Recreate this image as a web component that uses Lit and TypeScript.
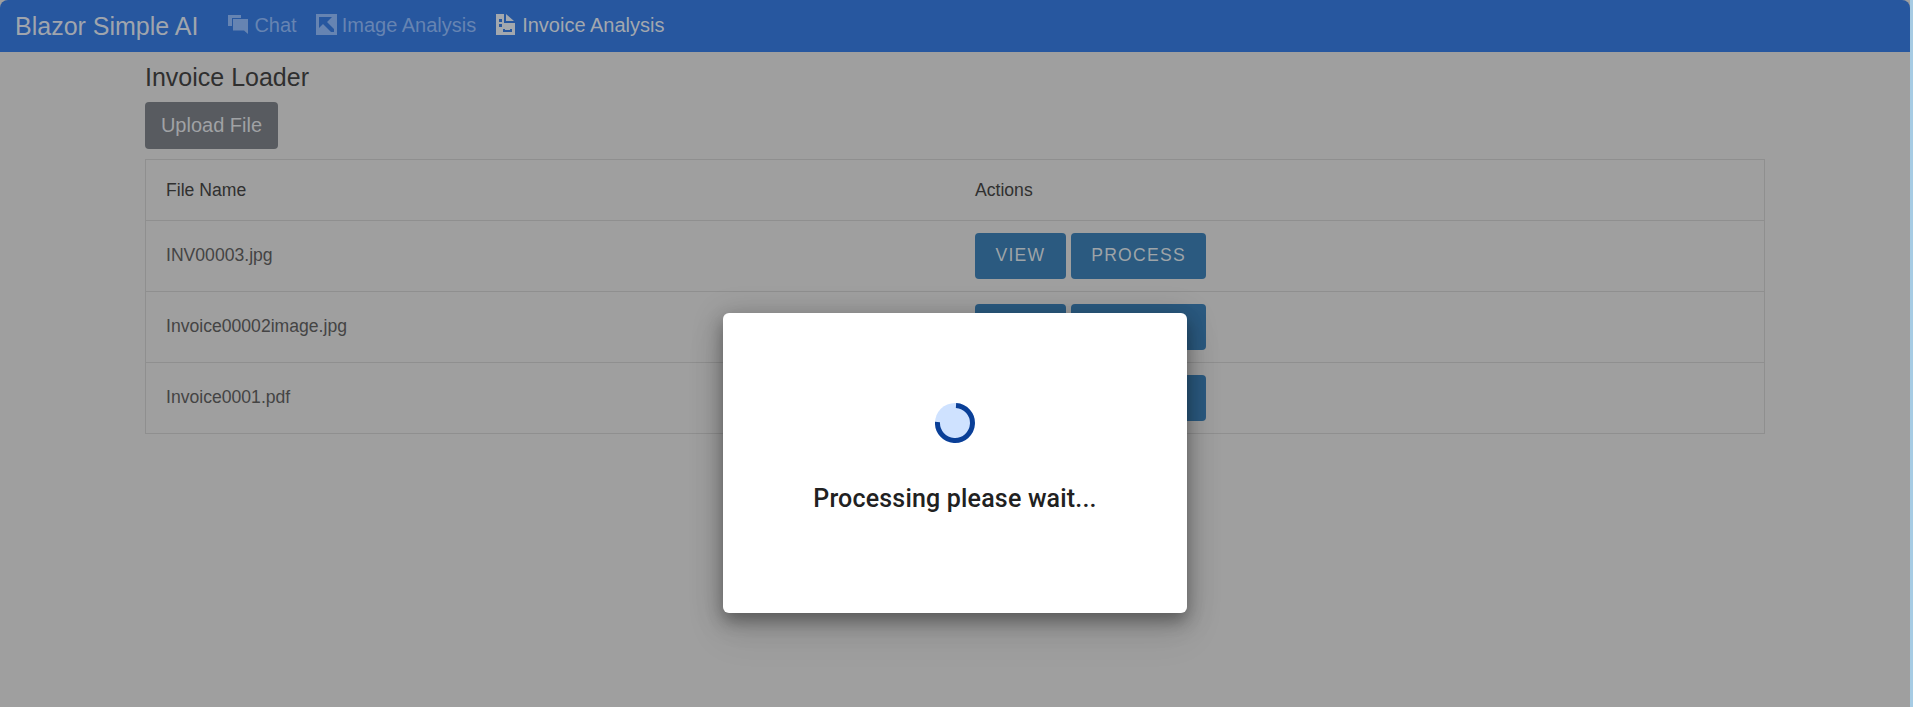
import { LitElement, html, css, svg } from "lit";
import { customElement } from "lit/decorators.js";

const chatIcon = svg`<path d="M0 1h13v3H4v8H0z"/><path d="M5 5h15v15l-4-3.5H5z"/>`;
const imgIcon = svg`<path fill-rule="evenodd" d="M0 0h21v21H0zM3 3v11l4-4 8 8h3v-3l-7-7 5-5z"/>`;
const docIcon = svg`<path fill-rule="evenodd" d="M0 0h8v9h11v12H0zM3 5v3h3V5zM3 10v3h3v-3zM7 15v3h9v-3h-2v1H9v-1z"/><path d="M10 0l8 7h-8z"/>`;

@customElement("app-root")
export class AppRoot extends LitElement {
  static styles = css`
    :host { display: block; width: 1913px; height: 707px; position: relative; overflow: hidden; background: #a6cbe3; font-family: "Liberation Sans", Arial, sans-serif; }
    .page { width: 1910px; height: 707px; background: #9f9f9f; display: flex; flex-direction: column; }
    .nav { height: 52px; flex: none; background: #27579f; border-radius: 8px 8px 0 0; display: flex; align-items: center; padding: 0 0 2px 15px; box-sizing: border-box; }
    .brand { font-size: 25px; color: #a0a5ad; margin: 2px 30px 0 0; }
    .link { display: flex; align-items: center; font-size: 20px; color: #6684b2; margin-right: 20px; }
    .link.chat { margin-right: 19px; }
    .link svg { width: 21px; height: 21px; fill: currentColor; margin: -1px 5px 0 0; }
    .link.on { color: #a3a8ae; }
    .main { padding: 0 145px; display: flex; flex-direction: column; align-items: flex-start; }
    h1 { font-weight: 400; font-size: 25px; line-height: 28px; margin: 11px 0 11px; color: #2f2f2f; }
    .upload { height: 47px; width: 133px; box-sizing: border-box; border: 0; border-radius: 4px; background: #585b60; color: #a0a2a5; font: 20px "Liberation Sans", Arial, sans-serif; }
    .table { margin-top: 10px; width: 1620px; border: 1px solid #8f8f8f; box-sizing: border-box; display: grid; grid-template-columns: 809px 1fr; }
    .cell { padding: 0 20px; display: flex; align-items: center; gap: 5px; height: 70px; border-top: 1px solid #8f8f8f; font-size: 17.6px; color: #444; box-sizing: content-box; }
    .head { height: 60px; border-top: 0; color: #303030; }
    .name { height: 68px; padding-bottom: 2px; }
    .btn { height: 46px; box-sizing: border-box; border: 0; border-radius: 4px; background: #2b5a80; color: #9ea4a8; font: 17.6px "Liberation Sans", Arial, sans-serif; letter-spacing: 1.25px; padding: 0 20.4px 2px; }
    .modal { position: absolute; left: 723px; top: 313px; width: 464px; height: 300px; background: #fff; border-radius: 6px; box-shadow: 0 8px 16px 0 rgba(0,0,0,.3), 0 20px 38px 3px rgba(0,0,0,.08), 0 4px 30px 4px rgba(0,0,0,.14); display: flex; flex-direction: column; align-items: center; }
    .spin { width: 40px; height: 40px; margin-top: 90px; display: block; }
    .msg { margin-top: 41px; font: 500 25px/30px Roboto, sans-serif; letter-spacing: .0075em; color: #212121; }
  `;

  render() {
    const rows = ["INV00003.jpg", "Invoice00002image.jpg", "Invoice0001.pdf"];
    return html`
      <div class="page">
        <div class="nav">
          <span class="brand">Blazor Simple AI</span>
          <span class="link chat"><svg viewBox="0 0 21 21">${chatIcon}</svg>Chat</span>
          <span class="link"><svg viewBox="0 0 21 21">${imgIcon}</svg>Image Analysis</span>
          <span class="link on"><svg viewBox="0 0 21 21">${docIcon}</svg>Invoice Analysis</span>
        </div>
        <div class="main">
          <h1>Invoice Loader</h1>
          <button class="upload">Upload File</button>
          <div class="table">
            <div class="cell head">File Name</div>
            <div class="cell head">Actions</div>
            ${rows.map(r => html`
              <div class="cell name">${r}</div>
              <div class="cell"><button class="btn">VIEW</button><button class="btn">PROCESS</button></div>
            `)}
          </div>
        </div>
      </div>
      <div class="modal">
        <svg class="spin" viewBox="0 0 40 40">
          <circle cx="20" cy="20" r="20" fill="#cfe2ff"/>
          <path d="M21 2.5A17.5 17.5 0 1 1 2.5 19" fill="none" stroke="#0a3f97" stroke-width="5"/>
        </svg>
        <div class="msg">Processing please wait...</div>
      </div>
    `;
  }
}
